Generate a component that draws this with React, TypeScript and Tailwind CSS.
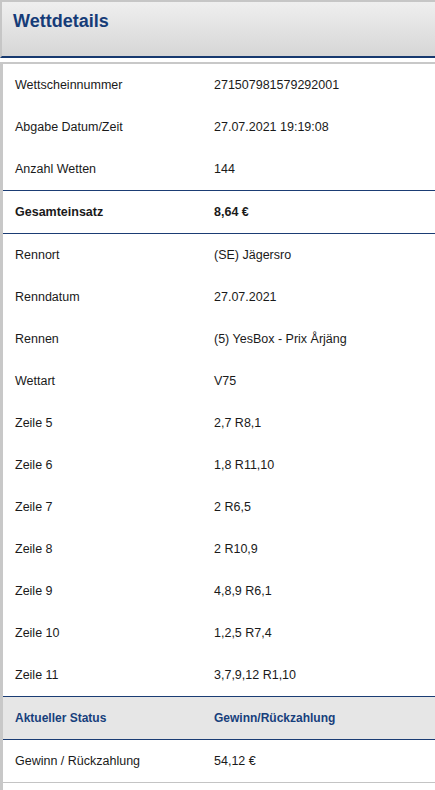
import React from "react";

const rowsA: [string, string][] = [
  ["Wettscheinnummer", "271507981579292001"],
  ["Abgabe Datum/Zeit", "27.07.2021 19:19:08"],
  ["Anzahl Wetten", "144"],
];

const rowsB: [string, string][] = [
  ["Rennort", "(SE) Jägersro"],
  ["Renndatum", "27.07.2021"],
  ["Rennen", "(5) YesBox - Prix Årjäng"],
  ["Wettart", "V75"],
  ["Zeile 5", "2,7 R8,1"],
  ["Zeile 6", "1,8 R11,10"],
  ["Zeile 7", "2 R6,5"],
  ["Zeile 8", "2 R10,9"],
  ["Zeile 9", "4,8,9 R6,1"],
  ["Zeile 10", "1,2,5 R7,4"],
  ["Zeile 11", "3,7,9,12 R1,10"],
];

function Row({ l, v, bold }: { l: string; v: string; bold?: boolean }) {
  return (
    <div className={`flex h-[42px] items-center text-[12.5px] text-[#1a1a1a] ${bold ? "font-bold" : ""}`}>
      <div className="w-[211px] pl-[12px]">{l}</div>
      <div>{v}</div>
    </div>
  );
}

export default function App() {
  return (
    <div className="w-[435px] h-[790px] bg-white overflow-hidden" style={{ fontFamily: '"Liberation Sans", Arial, sans-serif' }}>
      <div className="h-[58px] border-t-2 border-l-2 border-[#c6c6c6] bg-gradient-to-b from-[#efefef] to-[#d6d6d6] border-b-2 border-b-[#17396f] pl-[11px] pt-[7px]">
        <div className="text-[18px] font-bold text-[#163c78] leading-[24px]">Wettdetails</div>
      </div>
      <div className="mt-[4px] border-t-2 border-l-[3px] border-[#c8c8c8]">
        {rowsA.map(([l, v]) => (
          <Row key={l} l={l} v={v} />
        ))}
        <div className="border-t border-[#1b3d74]" />
        <Row l="Gesamteinsatz" v="8,64 €" bold />
        <div className="border-t border-[#1b3d74]" />
        {rowsB.map(([l, v]) => (
          <Row key={l} l={l} v={v} />
        ))}
        <div className="border-t border-[#1b3d74]" />
        <div className="flex h-[42px] items-center bg-[#e6e6e6] text-[12px] font-bold text-[#173f7c]">
          <div className="w-[211px] pl-[12px]">Aktueller Status</div>
          <div>Gewinn/Rückzahlung</div>
        </div>
        <div className="border-t border-[#1b3d74]" />
        <Row l="Gewinn / Rückzahlung" v="54,12 €" />
        <div className="border-t border-[#c4c4c4]" />
        <div className="h-[10px]" />
      </div>
    </div>
  );
}
